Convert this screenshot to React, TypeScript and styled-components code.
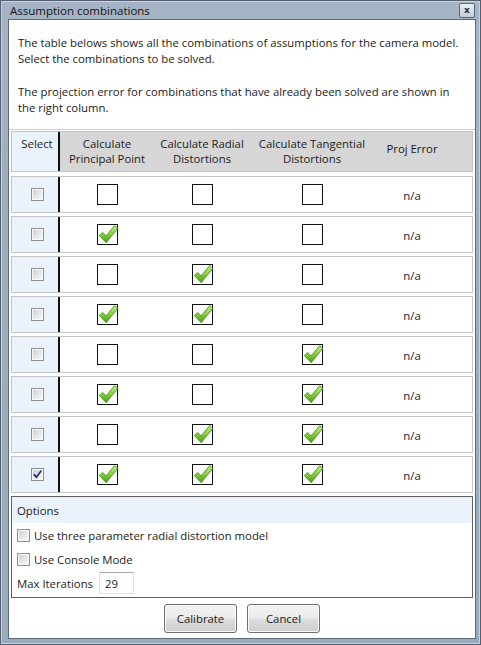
import React from 'react';
import styled, { createGlobalStyle } from 'styled-components';

const GlobalStyle = createGlobalStyle`
  html, body { margin: 0; padding: 0; }
  body {
    font-family: "Open Sans", "Noto Sans", sans-serif;
    font-size: 11.35px;
    color: #1b1b1b;
  }
  * { box-sizing: border-box; }
`;

const Window = styled.div`
  width: 481px;
  height: 645px;
  display: flex;
  flex-direction: column;
  background: linear-gradient(180deg, #a6b5c6 0%, #9eaec1 30%, #9aabbe 100%);
  border: 1px solid #56616f;
  box-shadow: inset 1px 1px 0 #c7d2de, inset -1px -1px 0 #c7d2de;
  padding: 0 4px 5px 7px;
`;

const TitleBar = styled.div`
  height: 23px;
  display: flex;
  align-items: center;
  justify-content: space-between;
  padding: 0 1px 0 2px;
`;

const Title = styled.span`
  font-size: 11.5px;
  color: #111;
`;

const CloseButton = styled.div`
  width: 16px;
  height: 15px;
  border: 1px solid #5a687b;
  border-radius: 2px;
  background: linear-gradient(180deg, #eef1f5 0%, #d5dce5 50%, #c3ccd8 100%);
  display: flex;
  align-items: center;
  justify-content: center;
  font-family: "DejaVu Sans", sans-serif;
  font-size: 9px;
  font-weight: bold;
  color: #28303b;
  line-height: 1;
`;

const Client = styled.div`
  flex: 1;
  background: #fff;
  border: 1px solid #5d6a7b;
  display: flex;
  flex-direction: column;
  padding: 15px 2px 5px 2px;
`;

const Description = styled.div`
  padding-left: 7px;
  line-height: 16px;
`;

const Para = styled.p`
  margin: 0 0 17px 0;
  &:last-child { margin-bottom: 0; }
`;

const Table = styled.div`
  margin: 13px -2px 0 -2px;
  border-top: 1px solid #cfcfcf;
  padding: 1px 2px 0 2px;
  display: flex;
  flex-direction: column;
  gap: 3px;
`;

const GRID = '46px 2px 94px 96px 124px 76px 1fr';

const HeaderRow = styled.div`
  display: grid;
  grid-template-columns: ${GRID};
  height: 41px;
  border: 1px solid #c3c3c3;
  background: #d6d6d6;
  line-height: 15px;
  text-align: center;
  margin-bottom: 1px;
`;

const Row = styled.div`
  display: grid;
  grid-template-columns: ${GRID};
  height: 37px;
  border: 1px solid #c6c6c6;
  background: #fff;
`;

const SelectCell = styled.div<{ $header?: boolean }>`
  background: #eaf2fb;
  padding-left: 4px;
  display: flex;
  justify-content: center;
  align-items: ${(p) => (p.$header ? 'flex-start' : 'center')};
  padding-top: ${(p) => (p.$header ? '4px' : '0')};
`;

const Divider = styled.div`
  background: #111;
`;

const HeadCell = styled.div<{ $top?: number }>`
  padding-top: ${(p) => p.$top ?? 4}px;
`;

const Cell = styled.div`
  display: flex;
  align-items: center;
  justify-content: center;
`;

const NA = styled.span`
  padding-top: 1px;
`;

const SmallBox = styled.span`
  width: 13px;
  height: 13px;
  border: 1px solid #8e8f8f;
  background: linear-gradient(135deg, #c9cdd2 0%, #e6e8eb 55%, #f7f7f7 100%);
  box-shadow: inset 0 0 0 1px #f9f9f9;
  display: inline-flex;
  align-items: center;
  justify-content: center;
  flex: none;
`;

const SmallCheck: React.FC<{ checked?: boolean }> = ({ checked }) => (
  <SmallBox>
    {checked && (
      <svg width="9" height="9" viewBox="0 0 9 9">
        <path d="M1.2 4.6 L3.4 7.2 L7.8 1.2" fill="none" stroke="#2b2d7c" strokeWidth="1.8" strokeLinecap="round" strokeLinejoin="round" />
      </svg>
    )}
  </SmallBox>
);

const BigCheck: React.FC<{ checked?: boolean }> = ({ checked }) => (
  <svg width="21" height="21" viewBox="0 0 21 21" style={{ overflow: 'visible' }}>
    <defs>
      <linearGradient id="greenGrad" x1="0" y1="0" x2="0" y2="1">
        <stop offset="0" stopColor="#c2f07a" />
        <stop offset="0.5" stopColor="#86cf3c" />
        <stop offset="1" stopColor="#4b9c1a" />
      </linearGradient>
    </defs>
    <rect x="0.5" y="0.5" width="20" height="20" fill="#fff" stroke="#111" strokeWidth="1" />
    {checked && (
      <path
        d="M2.3 11.5 L5.8 8.4 L9 12 L17.6 1.6 L20.8 4.3 L9.2 18.8 Z"
        fill="url(#greenGrad)"
        stroke="#3f8a17"
        strokeWidth="0.8"
        strokeLinejoin="round"
      />
    )}
  </svg>
);

const OptionsBox = styled.div`
  margin-top: 0;
  border: 1px solid #5f5f5f;
  height: 102px;
  display: flex;
  flex-direction: column;
`;

const OptionsHeader = styled.div`
  height: 26px;
  background: #eaf3fc;
  padding-left: 5px;
  display: flex;
  align-items: center;
`;

const OptionLine = styled.label`
  display: flex;
  align-items: center;
  gap: 4px;
  height: 24px;
  padding-left: 5px;
`;

const OptionsBody = styled.div`
  display: flex;
  flex-direction: column;
`;

const IterBox = styled.div`
  width: 35px;
  height: 22px;
  border: 1px solid #e2e3ea;
  border-top-color: #abadb3;
  display: flex;
  align-items: center;
  padding-left: 5px;
  margin-left: 2px;
`;

const ButtonBar = styled.div`
  margin-top: 6px;
  display: flex;
  justify-content: center;
  gap: 10px;
`;

const Button = styled.div`
  width: 73px;
  height: 29px;
  border: 1px solid #707070;
  border-radius: 3px;
  background: linear-gradient(180deg, #f2f2f2 0%, #ebebeb 48%, #dddddd 52%, #cfcfcf 100%);
  box-shadow: inset 0 0 0 1px #fbfbfb;
  display: flex;
  align-items: center;
  justify-content: center;
  color: #1b1b1b;
`;

const rows: [boolean, boolean, boolean, boolean][] = [
  [false, false, false, false],
  [false, true, false, false],
  [false, false, true, false],
  [false, true, true, false],
  [false, false, false, true],
  [false, true, false, true],
  [false, false, true, true],
  [true, true, true, true],
];

export default function App() {
  return (
    <>
      <GlobalStyle />
      <Window>
        <TitleBar>
          <Title>Assumption combinations</Title>
          <CloseButton>x</CloseButton>
        </TitleBar>
        <Client>
          <Description>
            <Para>
              The table belows shows all the combinations of assumptions for the camera model.
              <br />
              Select the combinations to be solved.
            </Para>
            <Para>
              The projection error for combinations that have already been solved are shown in
              <br />
              the right column.
            </Para>
          </Description>
          <Table>
            <HeaderRow>
              <SelectCell $header>Select</SelectCell>
              <Divider />
              <HeadCell>
                Calculate
                <br />
                Principal Point
              </HeadCell>
              <HeadCell>
                Calculate Radial
                <br />
                Distortions
              </HeadCell>
              <HeadCell>
                Calculate Tangential
                <br />
                Distortions
              </HeadCell>
              <HeadCell $top={9}>Proj Error</HeadCell>
              <div />
            </HeaderRow>
            {rows.map(([sel, a, b, c], i) => (
              <Row key={i}>
                <SelectCell>
                  <SmallCheck checked={sel} />
                </SelectCell>
                <Divider />
                <Cell>
                  <BigCheck checked={a} />
                </Cell>
                <Cell>
                  <BigCheck checked={b} />
                </Cell>
                <Cell>
                  <BigCheck checked={c} />
                </Cell>
                <Cell>
                  <NA>n/a</NA>
                </Cell>
                <div />
              </Row>
            ))}
            <OptionsBox>
              <OptionsHeader>Options</OptionsHeader>
              <OptionsBody>
                <OptionLine>
                  <SmallCheck />
                  Use three parameter radial distortion model
                </OptionLine>
                <OptionLine>
                  <SmallCheck />
                  Use Console Mode
                </OptionLine>
                <OptionLine>
                  Max Iterations
                  <IterBox>29</IterBox>
                </OptionLine>
              </OptionsBody>
            </OptionsBox>
          </Table>
          <ButtonBar>
            <Button>Calibrate</Button>
            <Button>Cancel</Button>
          </ButtonBar>
        </Client>
      </Window>
    </>
  );
}
